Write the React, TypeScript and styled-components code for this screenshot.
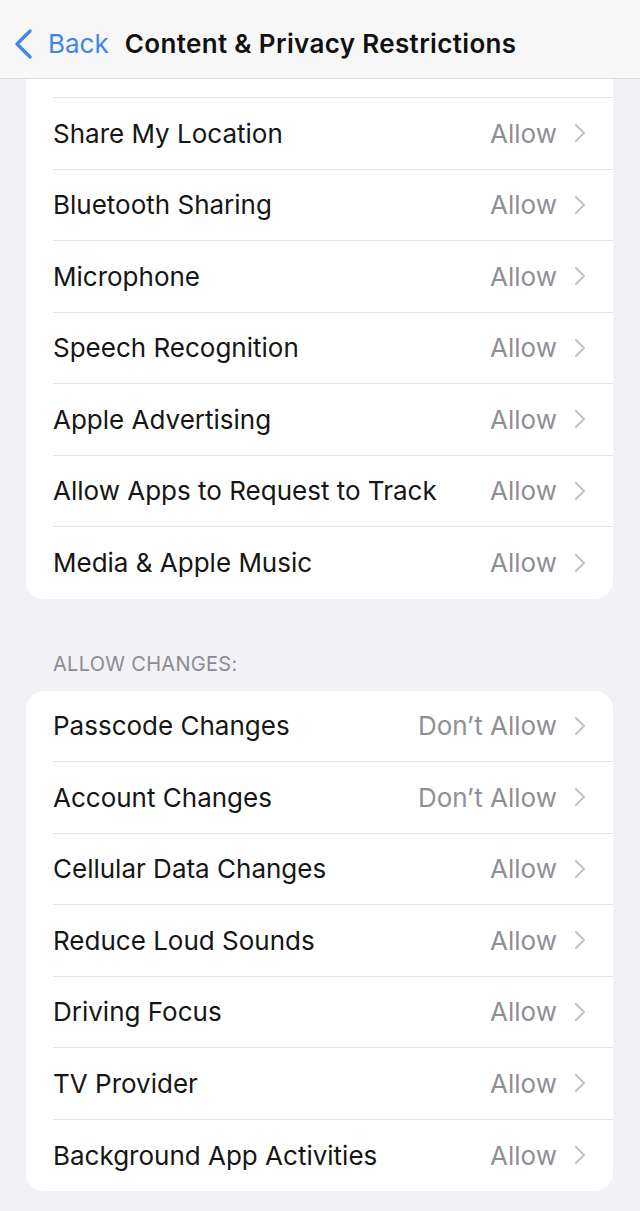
import { createGlobalStyle, styled } from "styled-components"

const GlobalStyle = createGlobalStyle`
  html, body {
    margin: 0;
    padding: 0;
    background: #f2f1f6;
  }
  body {
    font-family: Inter, "Noto Sans", "Liberation Sans", sans-serif;
    -webkit-font-smoothing: antialiased;
  }
`

const Page = styled.div`
  width: 640px;
  min-height: 1211px;
  background: #f2f1f6;
  overflow: hidden;
`

const NavBar = styled.div`
  height: 79px;
  box-sizing: border-box;
  background: #f7f7f7;
  border-bottom: 1px solid #dcdcdf;
  display: flex;
  align-items: center;
  padding: 9px 0 0 14px;
  gap: 16px;
`

const BackButton = styled.div`
  display: flex;
  align-items: center;
  gap: 15px;
  color: #3f86e8;
  font-size: 26px;
`

const Title = styled.div`
  font-size: 26px;
  font-weight: 600;
  color: #111;
  letter-spacing: 0.35px;
`

const Content = styled.div`
  padding: 0 27px 0 26px;
`

const Card = styled.div<{ $cutTop?: boolean }>`
  background: #fff;
  border-radius: ${(p) => (p.$cutTop ? "0 0 18px 18px" : "18px")};
  overflow: hidden;
`

// the row scrolled up under the nav bar, only its bottom edge shows
const Stub = styled.div`
  height: 19px;
  box-sizing: border-box;
  margin-left: 27px;
  border-bottom: 1px solid #e4e4e7;
`

const Row = styled.div<{ $last?: boolean }>`
  height: 71.5px;
  box-sizing: border-box;
  margin-left: 27px;
  padding-right: 27px;
  display: flex;
  align-items: center;
  border-bottom: ${(p) => (p.$last ? "none" : "1px solid #e4e4e7")};
`

const Label = styled.div`
  flex: 1;
  font-size: 26px;
  color: #161616;
`

const Value = styled.div`
  font-size: 26px;
  color: #8f8f94;
  margin-right: 17px;
`

const SectionHeader = styled.div`
  padding: 53px 0 0 27px;
  height: 92px;
  box-sizing: border-box;
  font-size: 20px;
  color: #8c8c91;
  letter-spacing: 0.3px;
`

const Chevron = () => (
  <svg width="12" height="20" viewBox="0 0 12 20" fill="none">
    <path d="M2 2l8 8-8 8" stroke="#c4c4c7" strokeWidth="2.2" strokeLinecap="round" strokeLinejoin="round" />
  </svg>
)

const BackChevron = () => (
  <svg width="19" height="30" viewBox="0 0 19 30" fill="none">
    <path d="M16 2L3 15l13 13" stroke="#3f86e8" strokeWidth="3.2" strokeLinecap="round" strokeLinejoin="round" />
  </svg>
)

const privacy = [
  ["Share My Location", "Allow"],
  ["Bluetooth Sharing", "Allow"],
  ["Microphone", "Allow"],
  ["Speech Recognition", "Allow"],
  ["Apple Advertising", "Allow"],
  ["Allow Apps to Request to Track", "Allow"],
  ["Media & Apple Music", "Allow"],
]

const changes = [
  ["Passcode Changes", "Don’t Allow"],
  ["Account Changes", "Don’t Allow"],
  ["Cellular Data Changes", "Allow"],
  ["Reduce Loud Sounds", "Allow"],
  ["Driving Focus", "Allow"],
  ["TV Provider", "Allow"],
  ["Background App Activities", "Allow"],
]

function SettingRows({ items }: { items: string[][] }) {
  return (
    <>
      {items.map(([label, value], i) => (
        <Row key={label} $last={i === items.length - 1}>
          <Label>{label}</Label>
          <Value>{value}</Value>
          <Chevron />
        </Row>
      ))}
    </>
  )
}

export default function App() {
  return (
    <Page>
      <GlobalStyle />
      <NavBar>
        <BackButton>
          <BackChevron />
          Back
        </BackButton>
        <Title>Content &amp; Privacy Restrictions</Title>
      </NavBar>
      <Content>
        <Card $cutTop>
          <Stub />
          <SettingRows items={privacy} />
        </Card>
        <SectionHeader>ALLOW CHANGES:</SectionHeader>
        <Card>
          <SettingRows items={changes} />
        </Card>
      </Content>
    </Page>
  )
}
